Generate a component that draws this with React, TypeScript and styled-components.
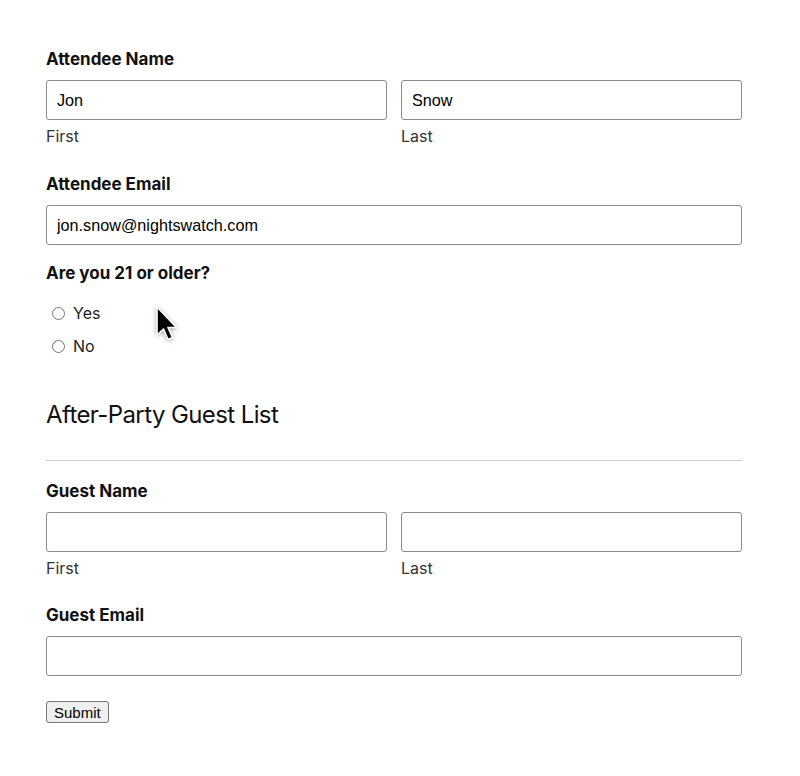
import React from 'react';
import styled, { createGlobalStyle } from 'styled-components';

const GlobalStyle = createGlobalStyle`
  html, body {
    margin: 0;
    padding: 0;
    background: #fff;
  }
  body {
    font-family: Inter, "Noto Sans", sans-serif;
    color: #111;
  }
`;

const App: React.FC = () => {
  return (
    <Page>
      <GlobalStyle />
      <Form onSubmit={(e) => e.preventDefault()}>
        <Label>Attendee Name</Label>
        <NameRow>
          <Column>
            <Input defaultValue="Jon" />
            <SubLabel>First</SubLabel>
          </Column>
          <Column>
            <Input defaultValue="Snow" />
            <SubLabel>Last</SubLabel>
          </Column>
        </NameRow>

        <Label $top={27}>Attendee Email</Label>
        <Input defaultValue="jon.snow@nightswatch.com" />

        <Label $top={17}>Are you 21 or older?</Label>
        <RadioList>
          <RadioRow>
            <Radio type="radio" name="age" />
            Yes
          </RadioRow>
          <RadioRow>
            <Radio type="radio" name="age" />
            No
          </RadioRow>
        </RadioList>

        <Heading>After-Party Guest List</Heading>
        <Divider />

        <Label $top={19}>Guest Name</Label>
        <NameRow>
          <Column>
            <Input />
            <SubLabel>First</SubLabel>
          </Column>
          <Column>
            <Input />
            <SubLabel>Last</SubLabel>
          </Column>
        </NameRow>

        <Label $top={26}>Guest Email</Label>
        <Input />

        <SubmitButton type="submit">Submit</SubmitButton>
      </Form>

      <Cursor width="26" height="40" viewBox="0 0 26 40">
        <path
          d="M2 2 L2 30 L8.5 24 L13 34.5 L17.5 32.5 L13 22.5 L21.5 22.5 Z"
          fill="#000"
          stroke="#fff"
          strokeWidth="1.6"
          strokeLinejoin="round"
        />
      </Cursor>
    </Page>
  );
};

export default App;

const Page = styled.div`
  position: relative;
  width: 800px;
  min-height: 776px;
  box-sizing: border-box;
  padding: 48px 58px 0 46px;
`;

const Form = styled.form`
  display: flex;
  flex-direction: column;
  width: 696px;
`;

const Label = styled.div<{ $top?: number }>`
  margin-top: ${(p) => p.$top ?? 0}px;
  margin-bottom: 10px;
  font-size: 17px;
  line-height: 22px;
  font-weight: 650;
  color: #111;
`;

const NameRow = styled.div`
  display: grid;
  grid-template-columns: 1fr 1fr;
  gap: 14px;
`;

const Column = styled.div`
  display: flex;
  flex-direction: column;
`;

const Input = styled.input`
  box-sizing: border-box;
  width: 100%;
  height: 40px;
  padding: 0 10px;
  border: 1px solid #8a8a8a;
  border-radius: 3px;
  font-family: "Liberation Sans", Arial, sans-serif;
  font-size: 16.2px;
  color: #000;
  background: #fff;
  outline: none;
`;

const SubLabel = styled.span`
  margin-top: 6px;
  font-size: 16px;
  line-height: 20px;
  color: #333;
`;

const RadioList = styled.div`
  display: flex;
  flex-direction: column;
  gap: 9px;
  margin-top: 7px;
`;

const RadioRow = styled.label`
  display: flex;
  align-items: center;
  gap: 8px;
  height: 24px;
  font-size: 16px;
  color: #222;
`;

const Radio = styled.input`
  width: 13px;
  height: 13px;
  margin: 0 0 0 6px;
`;

const Heading = styled.h2`
  margin: 41px 0 0;
  font-size: 24px;
  line-height: 32px;
  font-weight: 400;
  letter-spacing: -0.6px;
  color: #111;
`;

const Divider = styled.hr`
  width: 100%;
  margin: 29px 0 0;
  border: none;
  border-top: 1px solid #d0d0d0;
`;

const SubmitButton = styled.button`
  align-self: flex-start;
  margin-top: 25px;
  height: 22px;
  padding: 0 7px;
  font-family: "Liberation Sans", Arial, sans-serif;
  font-size: 15px;
  color: #000;
  background: #efefef;
  border: 1px solid #767676;
  border-radius: 3px;
`;

const Cursor = styled.svg`
  position: absolute;
  left: 155px;
  top: 305px;
  filter: drop-shadow(0 1px 2px rgba(0, 0, 0, 0.35));
`;
